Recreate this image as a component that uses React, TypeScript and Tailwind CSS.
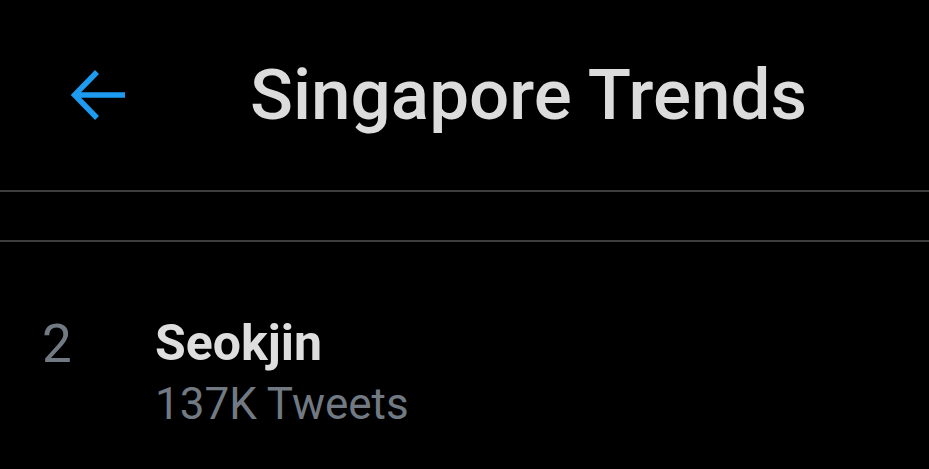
import React from "react";

export default function App() {
  return (
    <div className="w-[929px] h-[469px] bg-black overflow-hidden" style={{ fontFamily: "Roboto, 'Noto Sans', sans-serif" }}>
      <div className="h-[190px] flex items-center pl-[71px]">
        <svg width="55" height="54" viewBox="0 0 55 54" className="shrink-0 mt-[-1px]">
          <path d="M54 27 H4 M26 4 L3.5 27 L26 50" fill="none" stroke="#1d9bf0" strokeWidth="5.5" strokeLinecap="butt" strokeLinejoin="miter" />
        </svg>
        <div className="ml-[124px] text-[71px] leading-[80px] font-medium text-[#dcdcdc]">
          Singapore Trends
        </div>
      </div>
      <div className="h-[2px] bg-[#3d3d3d]" />
      <div className="h-[48px]" />
      <div className="h-[2px] bg-[#3d3d3d]" />
      <div className="flex pt-[71px]">
        <div className="w-[155px] pl-[42px] shrink-0 mt-[1px] text-[53px] leading-[60px] text-[#717a82]">2</div>
        <div className="flex flex-col">
          <div className="text-[50px] leading-[60px] font-bold text-[#dedede]">Seokjin</div>
          <div className="mt-[5px] text-[44px] leading-[52px] text-[#717a82]">137K Tweets</div>
        </div>
      </div>
    </div>
  );
}
